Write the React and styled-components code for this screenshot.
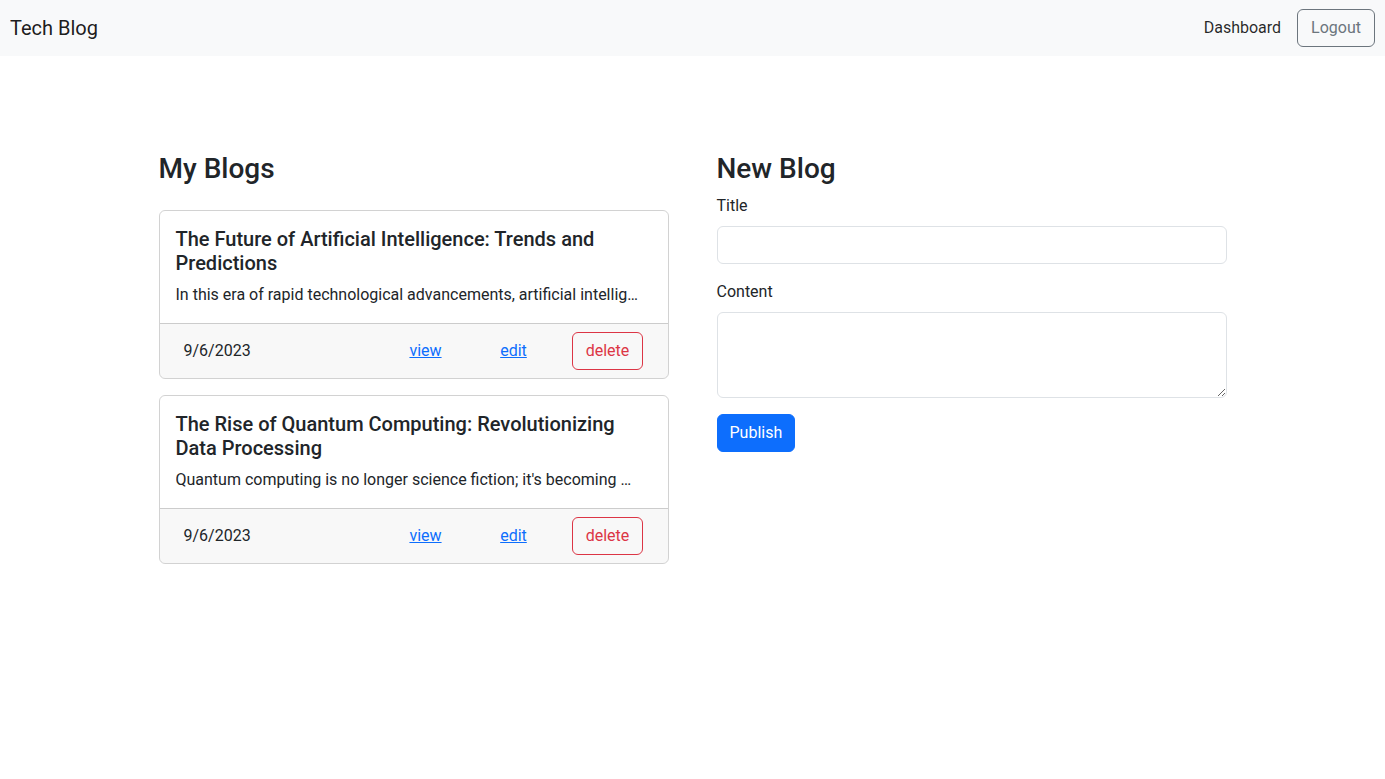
import React from "react";
import styled, { createGlobalStyle } from "styled-components";

const GlobalStyle = createGlobalStyle`
  * {
    box-sizing: border-box;
  }
  body {
    margin: 0;
    font-family: Roboto, Inter, "Noto Sans", "Liberation Sans", sans-serif;
    font-size: 16px;
    line-height: 1.5;
    color: #212529;
    background-color: #fff;
  }
`;

const Navbar = styled.nav`
  display: flex;
  align-items: center;
  justify-content: space-between;
  height: 56px;
  padding: 0 10px;
  background-color: #f8f9fa;
`;

const Brand = styled.a`
  font-size: 20px;
  color: rgba(0, 0, 0, 0.9);
  text-decoration: none;
`;

const NavRight = styled.div`
  display: flex;
  align-items: center;
`;

const NavLink = styled.a`
  padding: 8px;
  margin-right: 8px;
  color: rgba(0, 0, 0, 0.85);
  text-decoration: none;
`;

const OutlineButton = styled.button`
  font-family: inherit;
  font-size: 16px;
  line-height: 1.5;
  padding: 6px 13px;
  background: transparent;
  border: 1px solid ${(p) => p.color};
  color: ${(p) => p.color};
  border-radius: 6px;
  cursor: pointer;
`;

const Container = styled.main`
  max-width: 1068px;
  margin: 96px auto 0;
  display: grid;
  grid-template-columns: minmax(0, 1fr) minmax(0, 1fr);
  column-gap: 48px;
  align-items: start;
`;

const Heading = styled.h2`
  font-size: 28px;
  font-weight: 500;
  line-height: 1.2;
  margin: 0 0 ${(p) => p.mb}px;
`;

const CardList = styled.div`
  display: flex;
  flex-direction: column;
  gap: 16px;
`;

const Card = styled.div`
  border: 1px solid rgba(0, 0, 0, 0.175);
  border-radius: 6px;
  overflow: hidden;
`;

const CardBody = styled.div`
  padding: 16px;
`;

const CardTitle = styled.h5`
  font-size: 20px;
  font-weight: 500;
  line-height: 1.2;
  margin: 0 0 8px;
`;

const CardText = styled.p`
  margin: 0;
  white-space: nowrap;
  overflow: hidden;
  text-overflow: ellipsis;
`;

const CardFooter = styled.div`
  display: grid;
  grid-template-columns: 1fr 88px 88px 100px;
  align-items: center;
  padding: 8px 10px 8px 24px;
  background-color: rgba(33, 37, 41, 0.03);
  border-top: 1px solid rgba(0, 0, 0, 0.175);
`;

const FooterCell = styled.div`
  text-align: center;
`;

const TextLink = styled.a`
  color: #0d6efd;
  text-decoration: underline;
  cursor: pointer;
`;

const Form = styled.form`
  display: flex;
  flex-direction: column;
`;

const Field = styled.div`
  display: flex;
  flex-direction: column;
  margin-bottom: 16px;
`;

const Label = styled.label`
  display: block;
  margin-bottom: 8px;
`;

const Input = styled.input`
  height: 38px;
  padding: 6px 12px;
  font-family: inherit;
  font-size: 16px;
  border: 1px solid #dee2e6;
  border-radius: 6px;
  outline: none;
`;

const TextArea = styled.textarea`
  height: 86px;
  padding: 6px 12px;
  font-family: inherit;
  font-size: 16px;
  line-height: 1.5;
  border: 1px solid #dee2e6;
  border-radius: 6px;
  outline: none;
  resize: vertical;
`;

const PrimaryButton = styled.button`
  align-self: flex-start;
  font-family: inherit;
  font-size: 16px;
  line-height: 1.5;
  padding: 6px 12px;
  color: #fff;
  background-color: #0d6efd;
  border: 1px solid #0d6efd;
  border-radius: 6px;
  cursor: pointer;
`;

const blogs = [
  {
    id: 1,
    title: "The Future of Artificial Intelligence: Trends and Predictions",
    excerpt:
      "In this era of rapid technological advancements, artificial intellig…",
    date: "9/6/2023",
  },
  {
    id: 2,
    title: "The Rise of Quantum Computing: Revolutionizing Data Processing",
    excerpt: "Quantum computing is no longer science fiction; it's becoming …",
    date: "9/6/2023",
  },
];

export default function App() {
  return (
    <>
      <GlobalStyle />
      <Navbar>
        <Brand href="#">Tech Blog</Brand>
        <NavRight>
          <NavLink href="#">Dashboard</NavLink>
          <OutlineButton color="#6c757d">Logout</OutlineButton>
        </NavRight>
      </Navbar>
      <Container>
        <section>
          <Heading mb={24}>My Blogs</Heading>
          <CardList>
            {blogs.map((blog) => (
              <Card key={blog.id}>
                <CardBody>
                  <CardTitle>{blog.title}</CardTitle>
                  <CardText>{blog.excerpt}</CardText>
                </CardBody>
                <CardFooter>
                  <div>{blog.date}</div>
                  <FooterCell>
                    <TextLink>view</TextLink>
                  </FooterCell>
                  <FooterCell>
                    <TextLink>edit</TextLink>
                  </FooterCell>
                  <FooterCell>
                    <OutlineButton color="#dc3545">delete</OutlineButton>
                  </FooterCell>
                </CardFooter>
              </Card>
            ))}
          </CardList>
        </section>
        <section>
          <Heading mb={8}>New Blog</Heading>
          <Form onSubmit={(e) => e.preventDefault()}>
            <Field>
              <Label htmlFor="title">Title</Label>
              <Input id="title" type="text" />
            </Field>
            <Field>
              <Label htmlFor="content">Content</Label>
              <TextArea id="content" rows={3} />
            </Field>
            <PrimaryButton type="submit">Publish</PrimaryButton>
          </Form>
        </section>
      </Container>
    </>
  );
}
